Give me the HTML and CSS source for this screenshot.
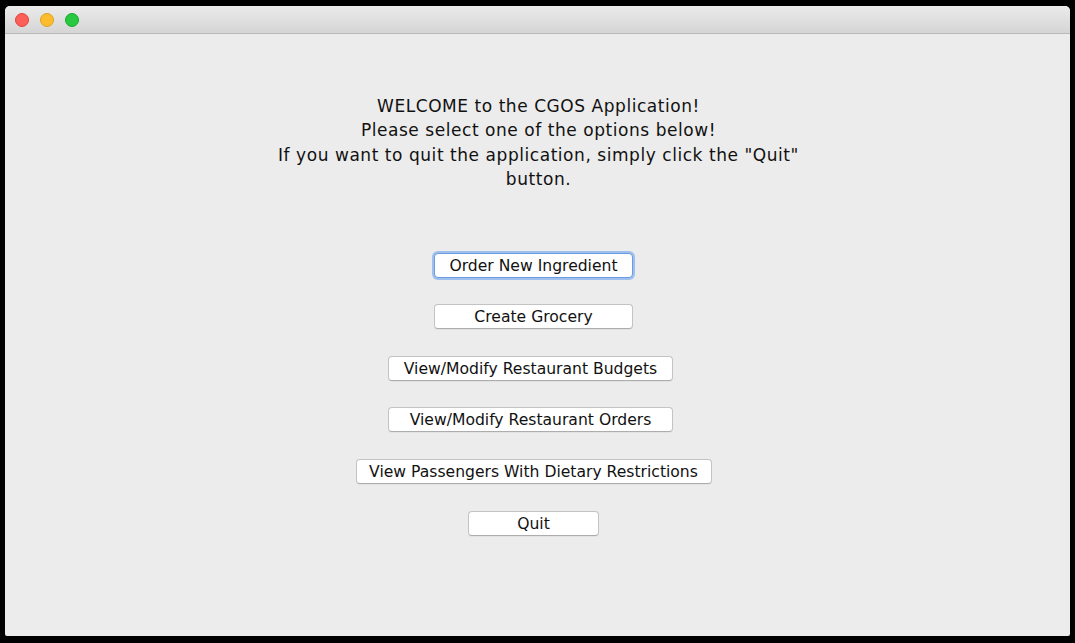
FILE: index.html
```html
<!DOCTYPE html>
<html>
<head>
<meta charset="utf-8">
<link rel="stylesheet" href="styles.css">
</head>
<body>
<div class="window">
  <div class="titlebar">
    <span class="light red"></span>
    <span class="light yellow"></span>
    <span class="light green"></span>
  </div>
  <div class="content">
    <div class="welcome">
      <div>WELCOME to the CGOS Application!</div>
      <div>Please select one of the options below!</div>
      <div>If you want to quit the application, simply click the "Quit"</div>
      <div>button.</div>
    </div>
    <div class="buttons">
      <button class="btn w-md focused">Order New Ingredient</button>
      <button class="btn w-md">Create Grocery</button>
      <button class="btn w-lg">View/Modify Restaurant Budgets</button>
      <button class="btn w-lg">View/Modify Restaurant Orders</button>
      <button class="btn w-xl">View Passengers With Dietary Restrictions</button>
      <button class="btn w-sm">Quit</button>
    </div>
  </div>
</div>
</body>
</html>
```
FILE: styles.css
```css
html, body {
  margin: 0;
  padding: 0;
  background: #000;
  height: 643px;
  overflow: hidden;
}
body {
  padding: 6px 5px 7px 5px;
  box-sizing: border-box;
  font-family: "DejaVu Sans", "Verdana", sans-serif;
}
.window {
  width: 1065px;
  height: 630px;
  background: #ececec;
  border-radius: 5px 5px 2px 2px;
  overflow: hidden;
  display: flex;
  flex-direction: column;
}
.titlebar {
  height: 27px;
  flex: none;
  background: linear-gradient(#ebebeb, #d5d5d5);
  border-bottom: 1px solid #b9b9b9;
  display: flex;
  align-items: center;
  padding-left: 10px;
  gap: 11px;
  box-sizing: content-box;
}
.light {
  width: 14px;
  height: 14px;
  border-radius: 50%;
  box-sizing: border-box;
}
.red { background: #fc5f57; border: 1px solid #e0443e; }
.yellow { background: #fdbc2e; border: 1px solid #dea123; }
.green { background: #28c840; border: 1px solid #1aab29; }
.content {
  flex: 1;
  display: flex;
  flex-direction: column;
  align-items: center;
  padding-top: 60px;
}
.welcome {
  text-align: center;
  font-size: 17px;
  letter-spacing: 0.55px;
  line-height: 24.4px;
  color: #111;
  padding-left: 2px;
}
.buttons {
  margin-top: 61px;
  margin-right: 8px;
  display: flex;
  flex-direction: column;
  align-items: center;
  gap: 26.6px;
}
.btn {
  height: 25px;
  box-sizing: border-box;
  background: #fff;
  border: 1px solid #c3c3c3;
  border-bottom-color: #adadad;
  border-radius: 4px;
  font-family: "DejaVu Sans", "Verdana", sans-serif;
  font-size: 15.6px;
  color: #111;
  padding: 0;
  line-height: 24px;
  box-shadow: 0 1px 0 rgba(0,0,0,0.04);
}
.btn.focused {
  border: 1px solid #6b9be0;
  box-shadow: 0 0 0 2px #9fc0ee;
}
.w-sm { width: 131px; }
.w-md { width: 199px; }
.w-lg { width: 285px; margin-right: 6px; }
.w-xl { width: 356px; }
```
